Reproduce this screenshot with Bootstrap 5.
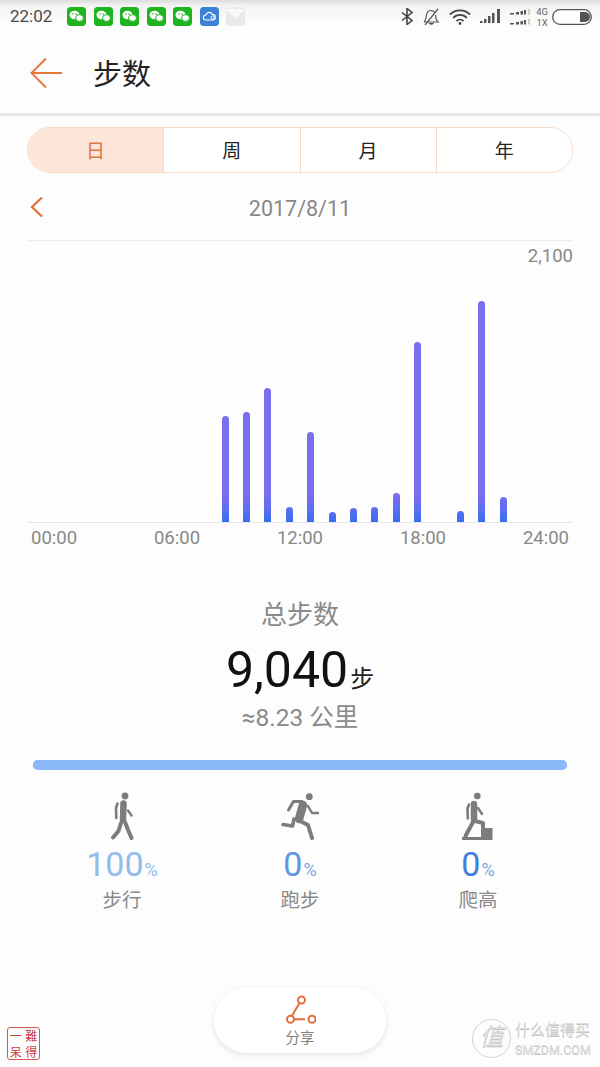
<!DOCTYPE html>
<html lang="zh">
<head>
  <meta charset="UTF-8">
  <title>步数</title>
  <link href="https://cdn.jsdelivr.net/npm/bootstrap@5.3.0/dist/css/bootstrap.min.css" rel="stylesheet">
  <style>
    html, body { height: 100%; }
    body {
      width: 600px; height: 1067px; overflow: hidden; margin: 0; position: relative;
      background: #fdfdfd; color: #8a8a8a;
      font-family: Roboto, "Noto Sans CJK SC", sans-serif;
    }
    /* status bar */
    .sbar {
      height: 33px; padding: 0 8px 0 10px;
      background: linear-gradient(#dcdcdc 0, #f4f4f4 6px, #fdfdfd 26px);
    }
    .sbar-time { font-size: 17px; line-height: 1; color: #4a4a4a; width: 57px; }
    .sbar-left { gap: 7.5px; }
    .app-ico { display: block; width: 19px; height: 19px; border-radius: 3px; }
    .net-lbl { font-size: 9.5px; line-height: 11px; color: #666; }
    /* header */
    .topbar { height: 83px; padding-left: 30px; border-bottom: 3px solid #e8e6e6; }
    .topbar-title { font-size: 29px; line-height: 1; color: #222; margin-left: 30px; padding-top: 5px; }
    /* tabs */
    .seg { margin: 11px 27px 0; height: 46px; border: 1.5px solid #f6d9c8; border-radius: 23px; overflow: hidden; background: #fff; }
    .seg-item {
      flex: 1 1 0; border: 0; border-left: 1.5px solid #f6d9c8; background: #fff; padding: 3px 0 0;
      font-size: 19px; color: #222; line-height: 1;
    }
    .seg-item:first-child { border-left: 0; }
    .seg-on { background: #fde5da; color: #e0773f; flex: 1 1 0; }
    /* date */
    .date-row { height: 68px; margin: 0 27px; border-bottom: 1px solid #ececec; position: relative; }
    .date-row svg { position: absolute; left: 3px; top: 23px; }
    .date-txt { font-size: 21.5px; line-height: 1; color: #888; padding-top: 5px; }
    /* chart */
    .chart-wrap { margin: 0 27px; height: 282px; border-bottom: 1px solid #e6e6e6; position: relative; }
    .chart-max { position: absolute; right: 0; top: 5px; font-size: 18.5px; line-height: 20px; color: #888; }
    .chart-bars { height: 100%; padding-left: 187.5px; align-items: flex-end; }
    .bar-slot { width: 21.4px; flex: none; display: flex; justify-content: center; }
    .bar-fill {
      display: block; width: 7px; border-radius: 3.5px 3.5px 0 0;
      background: linear-gradient(to top, #3570ee 0, #5f6eee 14px, #7a6dee 28px);
    }
    .axis-row { margin: 0 31px; height: 32px; font-size: 18.5px; color: #888; }
    /* totals */
    .tot-lbl { font-size: 26px; line-height: 1; color: #8a8a8a; margin-top: 47px; }
    .tot-num { font-size: 50px; line-height: 1; color: #111; margin-top: 17px; }
    .tot-unit { font-size: 24px; color: #222; margin-left: 2px; }
    .tot-km { font-size: 24.5px; line-height: 1; color: #8a8a8a; margin-top: 11px; }
    /* share of activities */
    .mix { margin: 29px 33px 0; }
    .mix-bar { height: 10px; border-radius: 5px; background: #8ab8f8; }
    .mix-bar .progress-bar { background: #8ab8f8; }
    .mix-row { margin-top: 22px; }
    .mix-ico { display: block; margin: 0 auto; }
    .mix-pct { font-size: 34px; line-height: 1; margin-top: 7px; }
    .mix-pct small { font-size: 18px; margin-left: 1px; }
    .pct-a, .pct-a small { color: #91bcec; }
    .pct-b { color: #5f95e2; }
    .pct-c { color: #3f7fdc; }
    .pct-b small, .pct-c small { color: #7aa7e4; }
    .mix-lbl { font-size: 19.5px; line-height: 1; color: #8a8a8a; margin-top: 10px; }
    /* share button */
    .share-btn {
      position: absolute; left: 214px; top: 988px; width: 172px; height: 65px; border-radius: 33px;
      background: #fff; box-shadow: 0 2px 6px rgba(0,0,0,.1); border: 0; padding: 6px 0 0;
    }
    .share-lbl { font-size: 14.5px; line-height: 1; color: #808080; margin-top: 6px; }
    /* overlays on the screenshot */
    .seal {
      position: absolute; left: 7px; top: 1027px; width: 33px; height: 33px;
      border: 1px solid #cf5a55; border-radius: 3px; color: #c9403c;
      display: grid; grid-template-columns: 1fr 1fr; font-family: "Noto Sans CJK TC", sans-serif;
      font-size: 12px; line-height: 15px; text-align: center;
    }
    .wmark { position: absolute; left: 472px; top: 1019px; width: 126px; color: #dcdcdc; text-shadow: 0 1px 0 #c4c4c4; }
    .wmark-cn { font-size: 15px; line-height: 18px; white-space: nowrap; }
    .wmark-en { font-size: 12.5px; line-height: 15px; margin-top: 3px; white-space: nowrap; }
    .wmark-ring {
      flex: none; width: 39px; height: 39px; border: 1.5px solid #d2d2d2; border-radius: 50%;
      font-size: 24px; line-height: 34px; text-align: center; margin-right: 4px; font-style: italic;
    }
  </style>
</head>
<body>
  <!-- status bar -->
  <div class="sbar d-flex align-items-center justify-content-between">
    <div class="d-flex align-items-center">
      <span class="sbar-time">22:02</span>
      <div class="d-flex sbar-left">
        <svg class="app-ico" viewBox="0 0 19 19"><rect width="19" height="19" rx="3" fill="#1db41f"/><ellipse cx="7.5" cy="8" rx="5" ry="4.2" fill="#fff"/><ellipse cx="12.5" cy="11" rx="4" ry="3.4" fill="#fff" stroke="#1db41f"/><circle cx="6" cy="7" r=".8" fill="#1db41f"/><circle cx="9" cy="7" r=".8" fill="#1db41f"/></svg>
        <svg class="app-ico" viewBox="0 0 19 19"><rect width="19" height="19" rx="3" fill="#1db41f"/><ellipse cx="7.5" cy="8" rx="5" ry="4.2" fill="#fff"/><ellipse cx="12.5" cy="11" rx="4" ry="3.4" fill="#fff" stroke="#1db41f"/><circle cx="6" cy="7" r=".8" fill="#1db41f"/><circle cx="9" cy="7" r=".8" fill="#1db41f"/></svg>
        <svg class="app-ico" viewBox="0 0 19 19"><rect width="19" height="19" rx="3" fill="#1db41f"/><ellipse cx="7.5" cy="8" rx="5" ry="4.2" fill="#fff"/><ellipse cx="12.5" cy="11" rx="4" ry="3.4" fill="#fff" stroke="#1db41f"/><circle cx="6" cy="7" r=".8" fill="#1db41f"/><circle cx="9" cy="7" r=".8" fill="#1db41f"/></svg>
        <svg class="app-ico" viewBox="0 0 19 19"><rect width="19" height="19" rx="3" fill="#1db41f"/><ellipse cx="7.5" cy="8" rx="5" ry="4.2" fill="#fff"/><ellipse cx="12.5" cy="11" rx="4" ry="3.4" fill="#fff" stroke="#1db41f"/><circle cx="6" cy="7" r=".8" fill="#1db41f"/><circle cx="9" cy="7" r=".8" fill="#1db41f"/></svg>
        <svg class="app-ico" viewBox="0 0 19 19"><rect width="19" height="19" rx="3" fill="#1db41f"/><ellipse cx="7.5" cy="8" rx="5" ry="4.2" fill="#fff"/><ellipse cx="12.5" cy="11" rx="4" ry="3.4" fill="#fff" stroke="#1db41f"/><circle cx="6" cy="7" r=".8" fill="#1db41f"/><circle cx="9" cy="7" r=".8" fill="#1db41f"/></svg>
        <svg class="app-ico" viewBox="0 0 19 19"><rect width="19" height="19" rx="3" fill="#3c80d8"/><path d="M6 13h6.500a2.800 2.800 0 0 0 0-5.600a3.500 3.500 0 0 0-6.600 .6a2.500 2.500 0 0 0 .1 5z" fill="none" stroke="#fff" stroke-width="1.200"/><circle cx="12.500" cy="10.300" r="1.500" fill="none" stroke="#fff"/></svg>
        <svg class="app-ico" viewBox="0 0 19 19"><rect width="19" height="19" rx="2" fill="#e9e9e9"/><path d="M0 2l9.500 8L19 2" fill="#f8f8f8" stroke="#fff"/></svg>
      </div>
    </div>
    <div class="d-flex align-items-center" style="gap:9px">
      <svg width="12" height="17" viewBox="0 0 12 17"><path d="M1 4.500l10 8L6 16.500V.5l5 4-10 8" fill="none" stroke="#444" stroke-width="1.600"/></svg>
      <svg width="18" height="18" viewBox="0 0 18 18"><path d="M2 14c2-2 2-4 2.500-7S7 2.500 9 2.500c1.500 0 3 .7 3.800 2M13.500 7c.3 3 .8 5.500 2.500 7H2M7.500 15.500a2 1.500 0 0 0 3.500 0z" fill="none" stroke="#555" stroke-width="1.200"/><path d="M16 1L3 17" stroke="#555" stroke-width="1.200"/></svg>
      <svg width="22" height="16" viewBox="0 0 22 16"><path d="M1 5.500a14 14 0 0 1 20 0M4.200 8.800a9.500 9.500 0 0 1 13.600 0M7.500 12a5 5 0 0 1 7 0" fill="none" stroke="#444" stroke-width="1.800"/><circle cx="11" cy="14.500" r="1.400" fill="#444"/></svg>
      <svg width="21" height="15" viewBox="0 0 21 15"><g fill="#555"><rect x="0" y="12" width="2.500" height="2"/><rect x="4" y="10" width="2.500" height="4"/><rect x="8" y="7" width="2.500" height="7"/><rect x="12" y="4" width="2.500" height="10"/><rect x="17" y="0" width="3" height="14"/></g></svg>
      <svg width="21" height="16" viewBox="0 0 21 16"><g fill="#555"><rect x="0" y="4" width="4" height="1.500"/><rect x="6" y="3" width="3" height="2.500"/><rect x="10.500" y="2" width="2.500" height="3.500"/><rect x="14" y="1" width="2" height="4.500"/><rect x="0" y="14" width="4" height="1.500"/><rect x="6" y="13" width="3" height="2.500"/><rect x="10.500" y="12" width="2.500" height="3.500"/><rect x="14" y="11" width="2" height="4.500"/></g><g fill="#ccc"><rect x="18" y="0" width="2" height="5.500"/><rect x="18" y="10" width="2" height="5.500"/></g></svg>
      <div class="net-lbl text-center" style="margin:0 -5px 0 -4px"><div>4G</div><div>1X</div></div>
      <svg width="40" height="16" viewBox="0 0 40 16"><rect x=".7" y=".7" width="38.600" height="14.600" rx="7.300" fill="#fff" stroke="#555" stroke-width="1.300"/><path d="M28 3h5a5 5 0 0 1 0 10h-5z" fill="#555"/></svg>
    </div>
  </div>

  <!-- header -->
  <div class="topbar d-flex align-items-center">
    <svg width="33" height="32" viewBox="0 0 33 32"><path d="M32 16H2M16 1.500L1.500 16 16 30.500" fill="none" stroke="#e8763a" stroke-width="2"/></svg>
    <div class="topbar-title">步数</div>
  </div>

  <!-- day / week / month / year -->
  <div class="seg d-flex">
    <button type="button" class="seg-item seg-on">日</button>
    <button type="button" class="seg-item">周</button>
    <button type="button" class="seg-item">月</button>
    <button type="button" class="seg-item">年</button>
  </div>

  <div class="date-row d-flex align-items-center justify-content-center">
    <svg width="14" height="22" viewBox="0 0 14 22"><path d="M12 1.500L2 11l10 9.500" fill="none" stroke="#df6f33" stroke-width="2.200"/></svg>
    <span class="date-txt">2017/8/11</span>
  </div>

  <!-- chart -->
  <div class="chart-wrap">
    <div class="chart-max">2,100</div>
    <div class="chart-bars d-flex">
      <span class="bar-slot"><span class="bar-fill" style="height:106px"></span></span>
      <span class="bar-slot"><span class="bar-fill" style="height:110px"></span></span>
      <span class="bar-slot"><span class="bar-fill" style="height:134px"></span></span>
      <span class="bar-slot"><span class="bar-fill" style="height:15px"></span></span>
      <span class="bar-slot"><span class="bar-fill" style="height:90px"></span></span>
      <span class="bar-slot"><span class="bar-fill" style="height:10px"></span></span>
      <span class="bar-slot"><span class="bar-fill" style="height:14px"></span></span>
      <span class="bar-slot"><span class="bar-fill" style="height:15px"></span></span>
      <span class="bar-slot"><span class="bar-fill" style="height:29px"></span></span>
      <span class="bar-slot"><span class="bar-fill" style="height:180px"></span></span>
      <span class="bar-slot"></span>
      <span class="bar-slot"><span class="bar-fill" style="height:11px"></span></span>
      <span class="bar-slot"><span class="bar-fill" style="height:221px"></span></span>
      <span class="bar-slot"><span class="bar-fill" style="height:25px"></span></span>
    </div>
  </div>
  <div class="axis-row d-flex justify-content-between align-items-center">
    <span>00:00</span><span>06:00</span><span>12:00</span><span>18:00</span><span>24:00</span>
  </div>

  <!-- totals -->
  <div class="text-center">
    <div class="tot-lbl">总步数</div>
    <div class="tot-num">9,040<span class="tot-unit">步</span></div>
    <div class="tot-km">≈8.23 公里</div>
  </div>

  <!-- activity split -->
  <div class="mix">
    <div class="progress mix-bar"><div class="progress-bar w-100"></div></div>
    <div class="row g-0 mix-row text-center">
      <div class="col-4">
        <svg class="mix-ico" width="40" height="48" viewBox="0 0 40 48">
          <circle cx="23" cy="4" r="3.400" fill="#7c7c7c"/>
          <g fill="none" stroke="#7c7c7c" stroke-linecap="round" stroke-linejoin="round">
            <path d="M21.500 11.500l-.5 16" stroke-width="6.500"/>
            <path d="M15.500 11.500l-1.500 4.500 .3 10" stroke-width="2.600"/>
            <path d="M26 18.500l3.500 5" stroke-width="2.400"/>
            <path d="M23 30l3.500 9 3 7" stroke-width="4"/>
            <path d="M19 31l-2.500 8-5.500 6.500" stroke-width="4"/>
          </g>
        </svg>
      </div>
      <div class="col-4">
        <svg class="mix-ico" width="40" height="48" viewBox="0 0 40 48">
          <circle cx="29.300" cy="4.700" r="3.400" fill="#7c7c7c"/>
          <g fill="none" stroke="#7c7c7c" stroke-linecap="round" stroke-linejoin="round">
            <path d="M23 13l-4 14" stroke-width="8.500"/>
            <path d="M22 9.500h-8.500L8.500 18" stroke-width="3"/>
            <path d="M28 14l4 7h6" stroke-width="2.400"/>
            <path d="M14 27l-1.500 7L3 32.500" stroke-width="3.600"/>
            <path d="M20 29l8 4 4 13" stroke-width="4"/>
          </g>
        </svg>
      </div>
      <div class="col-4">
        <svg class="mix-ico" width="40" height="48" viewBox="0 0 40 48">
          <circle cx="19.300" cy="4" r="3.300" fill="#7c7c7c"/>
          <g fill="none" stroke="#7c7c7c" stroke-linecap="round" stroke-linejoin="round">
            <path d="M16 12v15" stroke-width="6.500"/>
            <path d="M11 12.500l-1.500 4 .3 10" stroke-width="2.600"/>
            <path d="M20 16l4 6" stroke-width="2.400"/>
            <path d="M17 29l8 2v10" stroke-width="4"/>
            <path d="M15 30L7.500 44" stroke-width="4"/>
          </g>
          <path d="M4 48v-3h19v-4h4v-5h7.500v12z" fill="#7c7c7c"/>
        </svg>
      </div>
    </div>
    <div class="row g-0 text-center">
      <div class="col-4"><div class="mix-pct pct-a">100<small>%</small></div><div class="mix-lbl">步行</div></div>
      <div class="col-4"><div class="mix-pct pct-b">0<small>%</small></div><div class="mix-lbl">跑步</div></div>
      <div class="col-4"><div class="mix-pct pct-c">0<small>%</small></div><div class="mix-lbl">爬高</div></div>
    </div>
  </div>

  <!-- share -->
  <button type="button" class="share-btn d-flex flex-column align-items-center">
    <svg width="32" height="32" viewBox="0 0 32 32"><path d="M15.500 9L7.500 22.500M10 25.300h11" stroke="#e2703a" stroke-width="2" fill="none"/><g fill="#fff" stroke="#e2703a" stroke-width="2"><circle cx="17.500" cy="6" r="3.500"/><circle cx="6.500" cy="25.300" r="3.500"/><circle cx="28" cy="25.300" r="3.500"/></g></svg>
    <span class="share-lbl">分享</span>
  </button>

  <!-- seal + site watermark sit on top of the screenshot -->
  <div class="seal"><span>一</span><span>難</span><span>呆</span><span>得</span></div>
  <div class="wmark d-flex align-items-center">
    <div class="wmark-ring">值</div>
    <div>
      <div class="wmark-cn">什么值得买</div>
      <div class="wmark-en">SMZDM.COM</div>
    </div>
  </div>

  <script src="https://cdn.jsdelivr.net/npm/bootstrap@5.3.0/dist/js/bootstrap.bundle.min.js"></script>
</body>
</html>
